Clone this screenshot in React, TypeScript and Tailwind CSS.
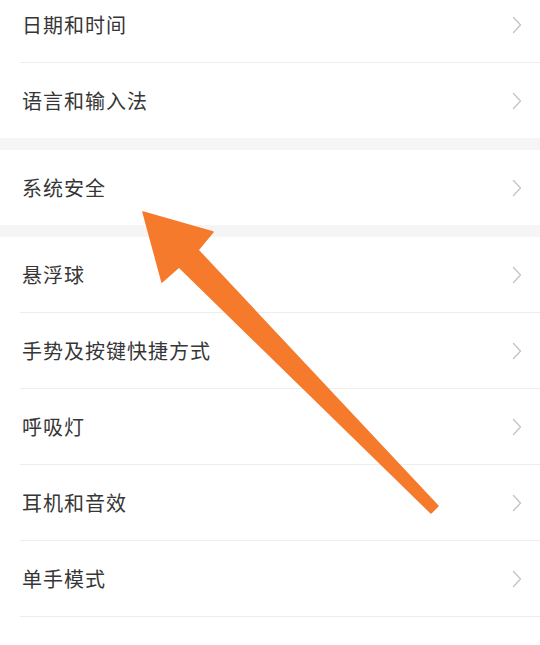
import React from "react";

const font = { fontFamily: '"Noto Sans CJK SC", "Noto Sans", sans-serif' };

function Chevron() {
  return (
    <svg width="10" height="18" viewBox="0 0 10 18" className="shrink-0">
      <path d="M1.5 1.5 L8.5 9 L1.5 16.5" fill="none" stroke="#c6c6c6" strokeWidth="1.4" strokeLinecap="round" strokeLinejoin="round" />
    </svg>
  );
}

function Row({ label, divider }: { label: string; divider?: boolean }) {
  return (
    <div className="flex flex-col">
      <div className="h-[75px] flex items-center justify-between pl-[22px] pr-[18px]">
        <span className="text-[20px] leading-none text-[#363636] tracking-[1px]">{label}</span>
        <Chevron />
      </div>
      {divider && <div className="ml-[20px] h-px bg-[#ededed]" />}
    </div>
  );
}

function Gap() {
  return <div className="h-[12px] bg-[#f5f5f5]" />;
}

export default function App() {
  return (
    <div className="relative w-[540px] h-[645px] overflow-hidden bg-white" style={font}>
      <div className="-mt-[13px] flex flex-col">
        <Row label="日期和时间" divider />
        <Row label="语言和输入法" />
        <Gap />
        <Row label="系统安全" />
        <Gap />
        <Row label="悬浮球" divider />
        <Row label="手势及按键快捷方式" divider />
        <Row label="呼吸灯" divider />
        <Row label="耳机和音效" divider />
        <Row label="单手模式" divider />
        <Row label="无障碍" />
      </div>
      <svg className="absolute left-0 top-0 pointer-events-none" width="540" height="645" viewBox="0 0 540 645">
        <polygon
          points="143,212 213,232 198,250 438,506 431,513 179,267 162,282"
          fill="#f57a2b"
          stroke="#f57a2b"
          strokeWidth="1.5"
          strokeLinejoin="round"
        />
      </svg>
    </div>
  );
}
